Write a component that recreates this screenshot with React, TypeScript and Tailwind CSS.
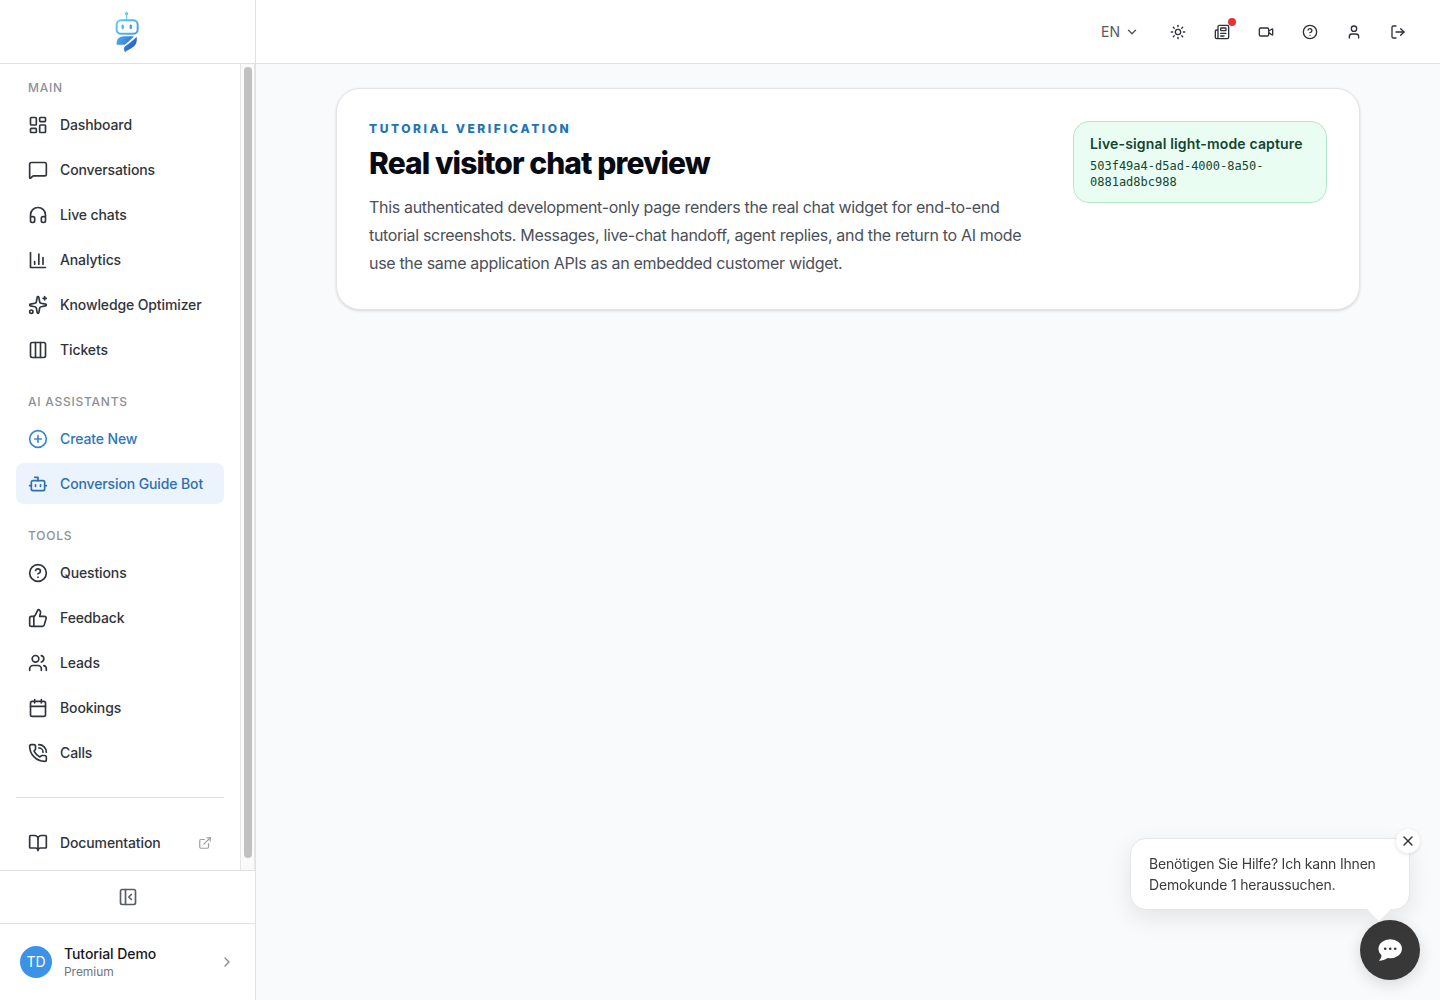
import React from "react";
import {
  BookOpen,
  Bot,
  Calendar,
  ChevronDown,
  ChevronRight,
  CircleHelp,
  CirclePlus,
  Columns3,
  ExternalLink,
  Headphones,
  LayoutDashboard,
  LogOut,
  MessageSquare,
  Newspaper,
  PanelLeftClose,
  PhoneCall,
  Sparkles,
  Sun,
  ThumbsUp,
  User,
  Users,
  Video,
  X,
} from "lucide-react";

type IconType = React.ComponentType<{ className?: string; size?: number | string }>;

function ChartBars({ className }: { className?: string; size?: number | string }) {
  return (
    <svg viewBox="0 0 24 24" fill="none" stroke="currentColor" strokeWidth="2" strokeLinecap="round" strokeLinejoin="round" className={className}>
      <path d="M3 3v18h18" />
      <path d="M18 17V9" />
      <path d="M13 17V5" />
      <path d="M8 17v-3" />
    </svg>
  );
}

function Logo() {
  return (
    <svg viewBox="75 30 81 132" className="h-11 w-[27px]" fill="none">
      <defs>
        <linearGradient id="head" x1="80" y1="50" x2="148" y2="104" gradientUnits="userSpaceOnUse">
          <stop stopColor="#5fd3ea" />
          <stop offset="1" stopColor="#4a9be2" />
        </linearGradient>
        <linearGradient id="wing" x1="84" y1="112" x2="135" y2="150" gradientUnits="userSpaceOnUse">
          <stop stopColor="#4fb0ea" />
          <stop offset="1" stopColor="#2457cf" />
        </linearGradient>
      </defs>
      <circle cx="113" cy="41" r="5" fill="#62cfe4" />
      <path d="M113 44v16" stroke="#62cfe4" strokeWidth="3.500" />
      <rect x="83" y="60.500" width="63" height="41" rx="13" stroke="url(#head)" strokeWidth="6" />
      <ellipse cx="101" cy="80" rx="4" ry="7.500" fill="#55bce8" />
      <ellipse cx="125.500" cy="80" rx="4" ry="7.500" fill="#4b9fe2" />
      <path d="M83 134c-1-16 6-25 22-25h30c-9 9-18 18-28 25z" fill="url(#wing)" />
      <path d="M143 110c2 18-3 26-14 33-8 5-16 8-21 14-4-8-4-14 0-18 12-9 24-18 35-29z" fill="url(#wing)" />
    </svg>
  );
}

function NavItem({ icon: Icon, label, tone = "default" }: { icon: IconType; label: string; tone?: "default" | "link" | "active" }) {
  const tones = {
    default: "text-[#30343b]",
    link: "text-[#2e76b9]",
    active: "bg-[#ebf4fc] text-[#2e6fae]",
  };
  return (
    <a className={`flex h-[41px] items-center gap-3 rounded-lg px-3 text-sm font-[450] tracking-[-0.12px] ${tones[tone]}`}>
      <Icon className={tone === "link" ? "size-5 shrink-0 text-[#3a87d2]" : "size-5 shrink-0"} />
      <span className="whitespace-nowrap">{label}</span>
      {label === "Documentation" && <ExternalLink className="ml-auto size-3.5 text-[#9a9da2]" />}
    </a>
  );
}

function Section({ title, children }: { title: string; children: React.ReactNode }) {
  return (
    <section className="mb-[23px]">
      <h2 className="flex h-[25px] items-start px-3 pt-px text-xs leading-4 font-medium tracking-[0.76px] text-[#8d9095]">{title}</h2>
      <div className="flex flex-col gap-1">{children}</div>
    </section>
  );
}

function Sidebar() {
  return (
    <aside className="flex w-64 shrink-0 flex-col border-r border-[#dfe1e4] bg-white">
      <div className="flex h-16 shrink-0 items-center justify-center border-b border-[#dfe1e4]">
        <Logo />
      </div>
      <div className="flex min-h-0 flex-1">
        <nav className="min-w-0 flex-1 overflow-hidden px-4 pt-[15px]">
          <Section title="MAIN">
            <NavItem icon={LayoutDashboard} label="Dashboard" />
            <NavItem icon={MessageSquare} label="Conversations" />
            <NavItem icon={Headphones} label="Live chats" />
            <NavItem icon={ChartBars} label="Analytics" />
            <NavItem icon={Sparkles} label="Knowledge Optimizer" />
            <NavItem icon={Columns3} label="Tickets" />
          </Section>
          <Section title="AI ASSISTANTS">
            <NavItem icon={CirclePlus} label="Create New" tone="link" />
            <NavItem icon={Bot} label="Conversion Guide Bot" tone="active" />
          </Section>
          <Section title="TOOLS">
            <NavItem icon={CircleHelp} label="Questions" />
            <NavItem icon={ThumbsUp} label="Feedback" />
            <NavItem icon={Users} label="Leads" />
            <NavItem icon={Calendar} label="Bookings" />
            <NavItem icon={PhoneCall} label="Calls" />
          </Section>
          <div className="mt-6 border-t border-[#dfe1e4] pt-6">
            <NavItem icon={BookOpen} label="Documentation" />
          </div>
        </nav>
        <div className="w-[15px] shrink-0 border-r border-l border-[#e6e6e6] bg-[#fafafa] px-[3px] pt-[3px]">
          <div className="h-[791px] w-2 rounded-full bg-[#c1c1c1]" />
        </div>
      </div>
      <div className="flex h-[53px] shrink-0 items-center justify-center border-t border-[#dfe1e4] text-[#585c63]">
        <PanelLeftClose className="size-5" />
      </div>
      <div className="flex h-[77px] shrink-0 items-center border-t border-[#dfe1e4] px-5">
        <div className="flex size-8 items-center justify-center rounded-full bg-[#3b93e8] text-sm text-white">TD</div>
        <div className="ml-3">
          <div className="text-sm leading-[18px] font-medium tracking-[-0.08px] text-[#16181d]">Tutorial Demo</div>
          <div className="text-xs leading-[17px] tracking-[-0.05px] text-[#71757b]">Premium</div>
        </div>
        <ChevronRight className="ml-auto size-4 text-[#85888d]" />
      </div>
    </aside>
  );
}

function TopBar() {
  const icons: IconType[] = [Sun, Newspaper, Video, CircleHelp, User, LogOut];
  return (
    <header className="flex h-16 shrink-0 items-center justify-end border-b border-[#dfe1e4] bg-white pr-[34px]">
      <button className="mr-[31px] flex items-center gap-[5px] text-sm text-[#55595f]">
        EN
        <ChevronDown className="size-3.5" strokeWidth={2.5} />
      </button>
      <div className="flex gap-7 text-[#2d3138]">
        {icons.map((Icon, i) => (
          <button key={i} className="relative">
            <Icon className="size-4" />
            {i === 1 && <span className="absolute -top-1.5 left-[14px] size-2 rounded-full bg-[#e5323a]" />}
          </button>
        ))}
      </div>
    </header>
  );
}

function ChatLauncher() {
  return (
    <div className="fixed right-5 bottom-5 flex flex-col items-end">
      <div className="relative mr-[10px] mb-[10px] w-[280px] rounded-2xl border border-[#e3e6ea] bg-white py-[14px] pr-4 pl-[18px] text-sm leading-[21px] tracking-[-0.19px] text-[#3b3b3b] shadow-[0_8px_24px_rgba(0,0,0,0.09)]">
        Benötigen Sie Hilfe? Ich kann Ihnen Demokunde 1 heraussuchen.
        <svg viewBox="0 0 24 12" className="absolute right-[18px] -bottom-3 h-3 w-6">
          <path d="M0 0h24L12 12z" fill="#fff" />
        </svg>
        <button className="absolute -top-[10px] -right-[11px] flex size-6 items-center justify-center rounded-full bg-white text-[#333] shadow-[0_1px_4px_rgba(0,0,0,0.12)]">
          <X className="size-4" />
        </button>
      </div>
      <button className="flex size-[60px] items-center justify-center rounded-full bg-[#383838] shadow-[0_4px_16px_rgba(0,0,0,0.14)]">
        <svg viewBox="0 0 24 22" className="h-[22px] w-6">
          <ellipse cx="12.200" cy="9.800" rx="11.700" ry="9.500" fill="#fff" />
          <path d="M3.200 15.200C4 17.500 3 20 .8 21.700c3.500 0 6.500-1.200 9.200-3z" fill="#fff" />
          <circle cx="7.200" cy="9.800" r="1.300" fill="#383838" />
          <circle cx="12.200" cy="9.800" r="1.300" fill="#383838" />
          <circle cx="17.200" cy="9.800" r="1.300" fill="#383838" />
        </svg>
      </button>
    </div>
  );
}

export default function App() {
  return (
    <div className="flex h-screen overflow-hidden bg-[#f8fafc] font-['Inter',sans-serif]">
      <Sidebar />
      <div className="flex min-w-0 flex-1 flex-col">
        <TopBar />
        <main className="flex-1 px-20 pt-6">
          <article className="flex h-[222px] w-[1024px] items-start justify-between rounded-3xl border border-[#e2e4e8] bg-white p-8 shadow-[0_1px_3px_rgba(0,0,0,0.14)]">
            <div className="w-[672px]">
              <p className="text-xs leading-4 font-extrabold tracking-[2.54px] text-[#2173b4]">TUTORIAL VERIFICATION</p>
              <h1 className="mt-2 text-3xl leading-9 font-extrabold tracking-[-0.91px] text-[#080a14]">Real visitor chat preview</h1>
              <p className="mt-3 text-base leading-7 tracking-[-0.325px] text-[#4b5058]">
                This authenticated development-only page renders the real chat widget for end-to-end tutorial screenshots. Messages, live-chat handoff, agent replies, and the return to AI mode use the same application APIs as an embedded customer widget.
              </p>
            </div>
            <div className="h-[82px] w-[254px] rounded-2xl border border-[#b4e8cd] bg-[#eafdf3] px-4 py-3 text-[#13452f]">
              <p className="text-sm leading-5 font-semibold tracking-[0.16px] whitespace-nowrap">Live-signal light-mode capture</p>
              <p className="mt-1 font-['DejaVu_Sans_Mono',monospace] text-xs leading-4">503f49a4-d5ad-4000-8a50-0881ad8bc988</p>
            </div>
          </article>
        </main>
      </div>
      <ChatLauncher />
    </div>
  );
}
